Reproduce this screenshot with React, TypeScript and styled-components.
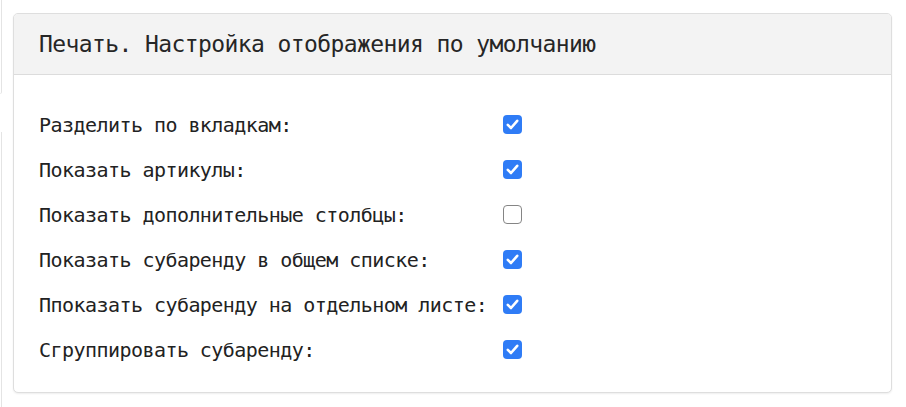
import React from 'react';
import styled, { createGlobalStyle } from 'styled-components';

const GlobalStyle = createGlobalStyle`
  html, body {
    margin: 0;
    padding: 0;
    background: #fff;
  }
  body {
    font-family: 'DejaVu Sans Mono', 'Liberation Mono', monospace;
    color: #222;
  }
`;

const settings = [
  { label: 'Разделить по вкладкам:', checked: true },
  { label: 'Показать артикулы:', checked: true },
  { label: 'Показать дополнительные столбцы:', checked: false },
  { label: 'Показать субаренду в общем списке:', checked: true },
  { label: 'Ппоказать субаренду на отдельном листе:', checked: true },
  { label: 'Сгруппировать субаренду:', checked: true },
];

const Page = styled.div`
  display: flex;
  gap: 11px;
  padding: 13px 14px 0 0;
  height: 407px;
  box-sizing: border-box;
  overflow: hidden;
`;

// edge of a neighbouring panel that is mostly scrolled off to the left
const EdgeStrip = styled.div`
  display: flex;
  flex-direction: column;
  justify-content: space-between;
  width: 2px;
  margin-top: -13px;
  flex-shrink: 0;
`;

const EdgePiece = styled.div<{ $tall: number; $bottom?: boolean }>`
  height: ${(p) => p.$tall}px;
  border-right: 1px solid #e4e4e4;
  ${(p) => (p.$bottom ? '' : 'border-bottom: 1px solid #ececec; border-bottom-right-radius: 3px;')}
`;

const Card = styled.section`
  flex: 1;
  align-self: flex-start;
  border: 1px solid #dedede;
  border-radius: 5px;
  background: #fff;
  box-shadow: 0 1px 2px rgba(0, 0, 0, 0.07);
  overflow: hidden;
`;

const CardHeader = styled.header`
  height: 60px;
  display: flex;
  align-items: center;
  padding: 0 25px;
  background: #f3f3f3;
  border-bottom: 1px solid #dcdcdc;
`;

const Title = styled.h2`
  margin: 0;
  font-size: 23px;
  font-weight: normal;
  color: #262626;
  letter-spacing: -0.6px;
`;

const CardBody = styled.div`
  display: grid;
  grid-template-columns: 464px auto;
  grid-auto-rows: 45px;
  align-items: center;
  padding: 27px 25px 20px;
`;

const Label = styled.span`
  font-size: 20px;
  letter-spacing: -0.55px;
  color: #222;
  white-space: nowrap;
`;

const Box = styled.span<{ $checked: boolean }>`
  width: 19px;
  height: 19px;
  box-sizing: border-box;
  border-radius: 4px;
  display: inline-flex;
  align-items: center;
  justify-content: center;
  background: ${(p) => (p.$checked ? '#2f7cf6' : '#fff')};
  border: ${(p) => (p.$checked ? 'none' : '1.3px solid #858585')};
`;

const Checkbox = ({ checked }: { checked: boolean }) => (
  <Box $checked={checked} role="checkbox" aria-checked={checked}>
    {checked && (
      <svg width="19" height="19" viewBox="0 0 19 19">
        <path
          d="M4.8 9.8 L8 13 L14.2 5.8"
          fill="none"
          stroke="#fff"
          strokeWidth="2.6"
          strokeLinecap="round"
          strokeLinejoin="round"
        />
      </svg>
    )}
  </Box>
);

export default function App() {
  return (
    <>
      <GlobalStyle />
      <Page>
        <EdgeStrip>
          <EdgePiece $tall={93} />
          <EdgePiece $tall={275} $bottom />
        </EdgeStrip>
        <Card>
          <CardHeader>
            <Title>Печать. Настройка отображения по умолчанию</Title>
          </CardHeader>
          <CardBody>
            {settings.map((s) => (
              <React.Fragment key={s.label}>
                <Label>{s.label}</Label>
                <Checkbox checked={s.checked} />
              </React.Fragment>
            ))}
          </CardBody>
        </Card>
      </Page>
    </>
  );
}
